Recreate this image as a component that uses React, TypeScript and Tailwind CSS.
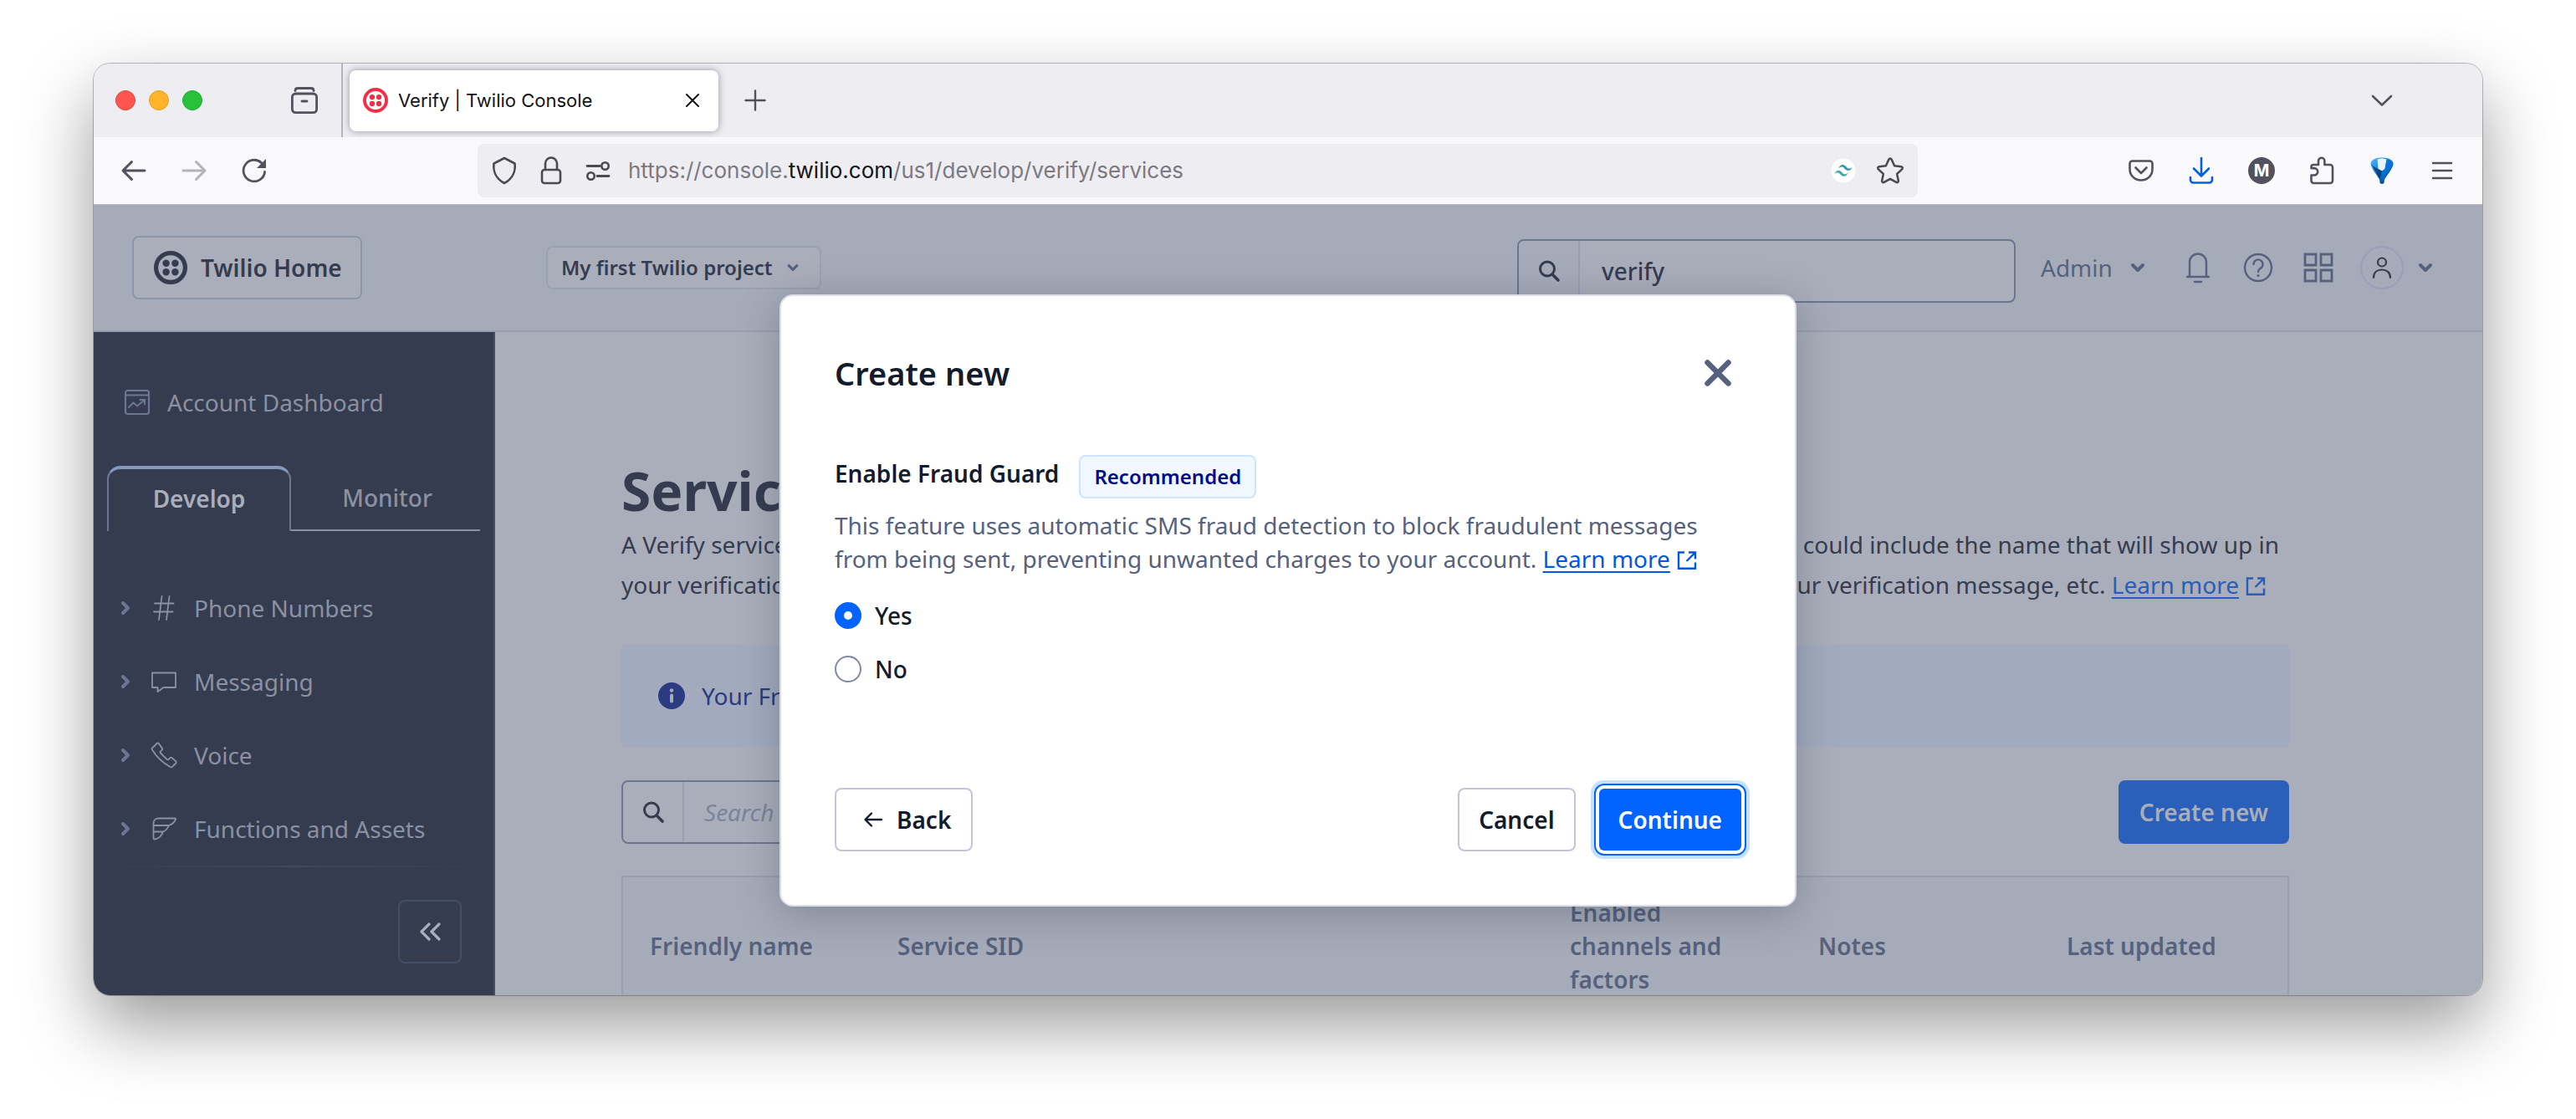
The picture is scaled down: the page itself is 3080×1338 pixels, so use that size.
import React from "react";

type IconProps = { className?: string };

const stroke = {
  fill: "none",
  stroke: "currentColor",
  strokeLinecap: "round" as const,
  strokeLinejoin: "round" as const,
};

function TwilioMark({ className }: IconProps) {
  return (
    <svg viewBox="0 0 40 40" className={className} aria-hidden="true">
      <circle cx="20" cy="20" r="17.4" fill="none" stroke="currentColor" strokeWidth="5.2" />
      <circle cx="14.6" cy="14.8" r="4.2" fill="currentColor" />
      <circle cx="25.4" cy="14.8" r="4.2" fill="currentColor" />
      <circle cx="14.6" cy="25.2" r="4.2" fill="currentColor" />
      <circle cx="25.4" cy="25.2" r="4.2" fill="currentColor" />
    </svg>
  );
}

function Chevron({ className }: IconProps) {
  return (
    <svg viewBox="0 0 20 20" className={className} aria-hidden="true">
      <path d="M4 7l6 6 6-6" {...stroke} strokeWidth="4" />
    </svg>
  );
}

function SearchIcon({ className }: IconProps) {
  return (
    <svg viewBox="0 0 28 28" className={className} aria-hidden="true">
      <circle cx="12" cy="11.5" r="8.5" {...stroke} strokeWidth="3" />
      <path d="M18 18l7 7" {...stroke} strokeWidth="3.6" />
    </svg>
  );
}

function ExternalIcon({ className }: IconProps) {
  return (
    <svg viewBox="0 0 24 24" className={className} aria-hidden="true">
      <path
        d="M9 2.5H2v19.2h20V14.5M14 2.5h8v8M21 3.5l-9.5 9.5"
        fill="none"
        stroke="currentColor"
        strokeWidth="2.4"
      />
    </svg>
  );
}

function TabStrip() {
  return (
    <div className="flex h-22 shrink-0 items-center bg-[#eeedf2] pl-[26px] pr-[100px] text-[#52525e]">
      <div className="flex gap-4">
        <span className="size-6 rounded-full border border-[#e0443e] bg-[#ff5650]" />
        <span className="size-6 rounded-full border border-[#dfa123] bg-[#ffb429]" />
        <span className="size-6 rounded-full border border-[#1dad2b] bg-[#27c238]" />
      </div>
      <button className="ml-[102px] flex size-10 items-center justify-center" aria-label="Firefox View">
        <svg viewBox="0 0 36 36" className="size-9">
          <path d="M7 6.5c0-2 1-3 3-3h16c2 0 3 1 3 3" {...stroke} strokeWidth="2.8" />
          <rect x="3.4" y="10" width="29.2" height="22.6" rx="4" {...stroke} strokeWidth="2.8" />
          <path d="M15 19h6" {...stroke} strokeWidth="2.8" />
        </svg>
      </button>
      <div className="ml-6 h-full w-0.5 bg-[#b4b4ba]" />
      <div className="ml-2 flex h-[73px] w-[441px] items-center rounded-lg bg-white pl-4 pr-[22px] shadow-[0_0_8px_rgba(60,60,80,0.5)]">
        <TwilioMark className="size-[30px] text-[#f22f46]" />
        <span className="ml-3 text-[22px] leading-8 text-[#15141a]">Verify | Twilio Console</span>
        <button className="ml-auto text-[#15141a]" aria-label="Close tab">
          <svg viewBox="0 0 18 18" className="size-[18px]">
            <path d="M2 2l14 14M16 2L2 16" {...stroke} strokeWidth="2" />
          </svg>
        </button>
      </div>
      <button className="ml-6 flex size-10 items-center justify-center" aria-label="New tab">
        <svg viewBox="0 0 26 26" className="size-[26px]">
          <path d="M13 1.5v23M1.5 13h23" {...stroke} strokeWidth="2.4" />
        </svg>
      </button>
      <button className="ml-auto flex size-10 items-center justify-center" aria-label="List all tabs">
        <svg viewBox="0 0 26 26" className="size-[26px]">
          <path d="M2 8l11 10.500L24 8" {...stroke} strokeWidth="2.6" />
        </svg>
      </button>
    </div>
  );
}

function ToolButton({ label, className, children }: { label: string; className?: string; children: React.ReactNode }) {
  return (
    <button aria-label={label} className={`flex w-[72px] items-center justify-center ${className ?? ""}`}>
      {children}
    </button>
  );
}

function Toolbar() {
  return (
    <div className="flex h-[81px] shrink-0 items-center border-b border-[#b9b9c0] bg-[#f9f9fb] px-3 text-[#52525e]">
      <ToolButton label="Back">
        <svg viewBox="0 0 32 32" className="size-8">
          <path d="M29 16H3.500M13.500 5.500L3 16l10.500 10.500" {...stroke} strokeWidth="3" />
        </svg>
      </ToolButton>
      <ToolButton label="Forward" className="text-[#b3b3bb]">
        <svg viewBox="0 0 32 32" className="size-8">
          <path d="M3 16h25.500M18.500 5.500L29 16 18.500 26.500" {...stroke} strokeWidth="3" />
        </svg>
      </ToolButton>
      <ToolButton label="Reload">
        <svg viewBox="0 0 32 32" className="size-8">
          <path d="M28.600 17.500A12.800 12.800 0 1 1 24.500 6.600" {...stroke} strokeWidth="2.800" />
          <path d="M30 2v11H19z" fill="currentColor" />
        </svg>
      </ToolButton>
      <div className="mx-[231px] flex h-16 min-w-0 flex-1 items-center rounded-lg bg-[#eeedf2] pl-4 pr-4 text-[#4b4a52]">
        <svg viewBox="0 0 32 36" className="h-9 w-8">
          <path d="M16 3l12.500 6.500c1.200 9-2.500 18-12.500 23.500C6 27.500 2.300 18.500 3.500 9.500z" {...stroke} strokeWidth="2.600" />
        </svg>
        <svg viewBox="0 0 28 36" className="ml-[26px] h-9 w-7">
          <rect x="3" y="17" width="22" height="16" rx="3" {...stroke} strokeWidth="2.600" />
          <path d="M7 17V9.500a7 7 0 0 1 14 0V17" {...stroke} strokeWidth="2.600" />
        </svg>
        <svg viewBox="0 0 32 28" className="ml-[26px] h-7 w-8">
          <path d="M3 8.500h15M15 20.500h14" {...stroke} strokeWidth="2.800" />
          <circle cx="24.500" cy="8.500" r="4.200" {...stroke} strokeWidth="2.600" />
          <circle cx="7.500" cy="20.500" r="4.200" {...stroke} strokeWidth="2.600" />
        </svg>
        <div className="ml-5 whitespace-nowrap text-[26px] leading-9 text-[#7b7a82]">
          https://console.<span className="text-[#15141a]">twilio.com</span>/us1/develop/verify/services
        </div>
        <svg viewBox="0 0 30 30" className="ml-auto size-[30px]">
          <circle cx="15" cy="15" r="14.500" fill="#fff" />
          <path d="M9.500 12.600c1-3.800 3.300-5.200 6.400-4.200 2.200.700 3 3.600 5.200 4 1.700.3 3.100-.4 4.300-2-1 3.800-3.300 5.200-6.400 4.200-2.200-.7-3-3.600-5.200-4-1.700-.3-3.100.400-4.300 2z" fill="#2e9ab0" />
          <path d="M4.500 19.400c1-3.800 3.300-5.200 6.400-4.200 2.200.700 3 3.600 5.200 4 1.700.3 3.100-.4 4.300-2-1 3.800-3.300 5.200-6.400 4.200-2.200-.7-3-3.600-5.200-4-1.700-.3-3.100.4-4.300 2z" fill="#3fa9ac" />
        </svg>
        <button className="ml-6" aria-label="Bookmark this page">
          <svg viewBox="0 0 34 34" className="size-[34px]">
            <path d="M17 2.500c.8 0 1.300.500 1.700 1.300l3.400 7.400 8 1c1.700.3 2.200 2 1 3.200l-5.900 5.500 1.600 8c.3 1.700-1.100 2.700-2.600 1.900L17 26.900l-7.200 3.900c-1.500.8-2.900-.200-2.600-1.900l1.600-8-5.900-5.500c-1.200-1.200-.7-2.900 1-3.200l8-1 3.400-7.400c.4-.8.900-1.300 1.700-1.300z" {...stroke} strokeWidth="2.600" />
          </svg>
        </button>
      </div>
      <ToolButton label="Save to Pocket">
        <svg viewBox="0 0 32 32" className="size-8">
          <path d="M5.500 4.500h21a3 3 0 0 1 3 3V14c0 7.800-5.500 13.500-13.500 13.500S2.500 21.800 2.500 14V7.500a3 3 0 0 1 3-3z" {...stroke} strokeWidth="2.600" />
          <path d="M9.500 12.500l6.500 6.500 6.500-6.500" {...stroke} strokeWidth="2.600" />
        </svg>
      </ToolButton>
      <ToolButton label="Downloads" className="text-[#0060df]">
        <svg viewBox="0 0 32 34" className="h-[34px] w-8">
          <path d="M16 2v21M7 14.500l9 9 9-9M3 25v3a3.500 3.500 0 0 0 3.500 3.500h19A3.500 3.500 0 0 0 29 28v-3" {...stroke} strokeWidth="2.600" />
        </svg>
      </ToolButton>
      <ToolButton label="Account">
        <span className="flex size-8 items-center justify-center rounded-full bg-[#52525e] text-[20px] font-bold leading-none text-white">
          M
        </span>
      </ToolButton>
      <ToolButton label="Extensions">
        <svg viewBox="0 0 32 36" className="h-9 w-8">
          <path d="M6 11h6V6.500a3.700 3.700 0 0 1 7.400 0V11H26a3 3 0 0 1 3 3v16a3 3 0 0 1-3 3H6.500a3 3 0 0 1-3-3v-6.500H7a4.200 4.200 0 0 0 0-8.400H3.500V13.500A2.500 2.500 0 0 1 6 11z" {...stroke} strokeWidth="2.600" />
        </svg>
      </ToolButton>
      <ToolButton label="Balloon extension">
        <svg viewBox="0 0 32 34" className="h-[34px] w-8">
          <defs>
            <linearGradient id="balloon" x1="0" y1="0" x2="1" y2="1">
              <stop offset="0" stopColor="#59b7ff" />
              <stop offset="0.450" stopColor="#0a84e8" />
              <stop offset="1" stopColor="#021c3c" />
            </linearGradient>
          </defs>
          <path d="M2.500 9C2.500 4 8.500 1.500 16 1.500S29.500 4 29.500 9c0 4.500-8.500 15-10.500 18.500l-.6 4.500c-.3 1-4.500 1-4.800 0l-.6-4.500C11 24 2.500 13.500 2.500 9z" fill="url(#balloon)" />
          <path d="M10.500 3.500c3-1.500 8-1.500 11 0L19.500 15 16 17.500 11.500 15z" fill="#e8f5ff" />
          <path d="M3 9c2.500 3 5 4.500 8.500 6L16 17.500 13.500 27z" fill="#04305f" opacity="0.750" />
          <path d="M21.500 3.500L19.500 15 16 17.500 17 30l1.500-3C22 20 28 14 29.400 9.500 28.500 6.500 25.500 4.500 21.500 3.500z" fill="#0a72d8" opacity="0.800" />
        </svg>
      </ToolButton>
      <ToolButton label="Open menu">
        <svg viewBox="0 0 28 28" className="size-7">
          <path d="M3 5h22M3 14h22M3 23h22" {...stroke} strokeWidth="2.600" />
        </svg>
      </ToolButton>
    </div>
  );
}

function AppHeader() {
  return (
    <header className="flex h-38 shrink-0 items-center border-b-2 border-[#989fb1] bg-[#a6abb9] text-[#353c50]">
      <div className="w-[541px] shrink-0 pl-[46px]">
        <a href="#home" className="inline-flex h-19 items-center gap-4 rounded-lg border-2 border-[#8d95ab] bg-[#a9aeba] pl-6 pr-[22px] text-[28px] font-semibold leading-10">
          <TwilioMark className="size-10" />
          Twilio Home
        </a>
      </div>
      <button className="flex h-13 items-center gap-4 rounded-lg border-2 border-[#9aa1b3] bg-[#a9aeba] pl-4 pr-6 text-[24px] font-semibold leading-9">
        My first Twilio project
        <Chevron className="size-4 text-[#56627d]" />
      </button>
      <label className="ml-auto mt-2 flex h-19 w-[596px] items-center overflow-hidden rounded-lg border-2 border-[#6b7691] bg-[#a9aeba]">
        <span className="flex h-full w-[73px] items-center justify-center border-r-2 border-[#989fb1] bg-[#a6abb9]">
          <SearchIcon className="size-7" />
        </span>
        <input aria-label="Search" defaultValue="verify" className="min-w-0 flex-1 bg-transparent px-[26px] text-[28px] font-medium leading-10 outline-none" />
      </label>
      <div className="flex w-[558px] shrink-0 items-center pl-[30px] text-[#56627d]">
        <button className="flex w-[152px] items-center gap-5 text-[28px] leading-10">
          Admin
          <Chevron className="size-5" />
        </button>
        <ToolButton label="Notifications">
          <svg viewBox="0 0 32 40" className="h-10 w-8">
            <path d="M6 30V13.500a10 10 0 0 1 20 0V30M3 31h26M12 37h8" {...stroke} strokeWidth="2.400" />
          </svg>
        </ToolButton>
        <ToolButton label="Help">
          <svg viewBox="0 0 36 36" className="size-9">
            <circle cx="18" cy="18" r="16" {...stroke} strokeWidth="2.400" />
            <path d="M12.500 14a5.500 5.500 0 1 1 8.300 4.700c-1.900 1.200-2.800 2.300-2.800 4.300" {...stroke} strokeWidth="2.400" />
            <circle cx="18" cy="27.500" r="1.600" fill="currentColor" />
          </svg>
        </ToolButton>
        <ToolButton label="Products">
          <svg viewBox="0 0 36 36" className="size-9">
            <path d="M2 2h13v13H2zM21 2h13v13H21zM2 21h13v13H2zM21 21h13v13H21z" {...stroke} strokeLinejoin="miter" strokeWidth="2.800" />
          </svg>
        </ToolButton>
        <button aria-label="User menu" className="ml-3.5 flex items-center gap-4">
          <span className="flex size-13 items-center justify-center rounded-full border-2 border-[#9e9cbb] text-[#353c50]">
            <svg viewBox="0 0 24 28" className="h-7 w-6">
              <circle cx="12" cy="7.500" r="5" {...stroke} strokeWidth="2.200" />
              <path d="M2 26c0-6.500 4.500-9.500 10-9.500S22 19.500 22 26" {...stroke} strokeWidth="2.200" />
            </svg>
          </span>
          <Chevron className="size-5" />
        </button>
      </div>
    </header>
  );
}

const navItems = [
  {
    label: "Phone Numbers",
    icon: <path d="M13.500 2L10 30M22.500 2L19 30M5 10.500h22.500M4 20.500h22.500" />,
  },
  {
    label: "Messaging",
    icon: <path d="M2 5.500h28v17.500H15.500L8.500 28v-5H2z" />,
  },
  {
    label: "Voice",
    icon: (
      <path d="M7.500 2L2 7.500c-.6.600-.5 1.600.2 2.600C7 17.500 15 25.500 23.500 30c1 .5 1.900.4 2.500-.2l4.300-4.300c.7-.7.700-1.500 0-2.200l-4.800-4.200c-.7-.6-1.500-.5-2.100.1l-1.600 1.700c-.7.700-1.600.7-2.300 0L12 13.500c-.6-.7-.6-1.500 0-2.100l1.800-1.700c.6-.6.600-1.400 0-2.100L9.700 2c-.6-.700-1.500-.700-2.200 0z" />
    ),
  },
  {
    label: "Functions and Assets",
    icon: (
      <path d="M9.500 3.500H29c1 0 1.300.7.900 1.500C28 9 25 11 22 12c-1.500 3.500-3.500 6-7 7.500-1.500 4.500-4.500 8-10 9-.9.100-1.500-.3-1.500-1.200V9.500c0-3.500 2.500-6 6-6zM4 12h18M4 19.500h11" />
    ),
  },
];

function Sidebar() {
  return (
    <aside className="flex w-[480px] shrink-0 flex-col border-r-2 border-[#434e69] bg-[#353c50] pt-16 text-[28px] leading-10 text-[#8a91a3]">
      <a href="#dashboard" className="flex items-center gap-5 pl-9">
        <svg viewBox="0 0 32 32" className="size-8 text-[#6b7695]">
          <rect x="2" y="2" width="28" height="28" rx="2.500" {...stroke} strokeWidth="2.200" />
          <path d="M2 7.500h28M6 22l5.500-5.500 4.500 4L25 13M19.500 13H25v5.500" {...stroke} strokeWidth="2" />
        </svg>
        Account Dashboard
      </a>
      <div role="tablist" className="mx-4 mt-14 flex h-[78px] font-medium">
        <button role="tab" aria-selected="true" className="w-[220px] rounded-t-2xl border-x-2 border-t-4 border-x-[#6b7695] border-t-[#8499bb] pb-1 font-semibold text-[#a9aeba]">
          Develop
        </button>
        <button role="tab" aria-selected="false" className="flex-1 border-b-2 border-[#8a91a3] pl-1">
          Monitor
        </button>
      </div>
      <nav className="mt-12 flex flex-col">
        {navItems.map((item) => (
          <a key={item.label} href="#nav" className="flex h-22 items-center pl-8">
            <svg viewBox="0 0 12 18" className="h-[18px] w-3 text-[#6b7695]">
              <path d="M3 3l6 6-6 6" {...stroke} strokeWidth="4" />
            </svg>
            <svg viewBox="0 0 32 32" className="ml-6 size-8" {...stroke} strokeWidth="1.800">
              {item.icon}
            </svg>
            <span className="ml-5">{item.label}</span>
          </a>
        ))}
      </nav>
      <div className="h-0.5 bg-linear-to-r from-transparent via-[#3e475c] to-transparent" />
      <div className="mt-auto flex justify-end pb-[38px] pr-[38px]">
        <button aria-label="Collapse navigation" className="flex size-19 items-center justify-center rounded-lg border-2 border-[#434e69] text-[#a9aeba]">
          <svg viewBox="0 0 28 24" className="h-6 w-7">
            <path d="M13 3l-9 9 9 9M25 3l-9 9 9 9" {...stroke} strokeWidth="3.200" />
          </svg>
        </button>
      </div>
    </aside>
  );
}

function Services() {
  return (
    <main className="min-w-0 flex-1 overflow-hidden bg-[#a9aeba] pl-[151px] pr-[231px] pt-[150px] text-[28px] text-[#353c50]">
      <h1 className="text-[64px] font-bold leading-[80px]">Services</h1>
      <p className="whitespace-nowrap leading-12">
        <span className="flex justify-between pr-3">
          <span>A Verify service is a set of</span>
          <span>common settings. It could include the name that will show up in</span>
        </span>
        <span className="flex justify-between pr-7">
          <span>your verification message, and</span>
          <span>
            the length of your verification message, etc.{" "}
            <a href="#learn" className="text-[#2a5db8]">
              <span className="underline underline-offset-4">Learn more</span>
              <ExternalIcon className="ml-2 inline size-6 align-[-3px]" />
            </a>
          </span>
        </span>
      </p>
      <div className="mt-12 flex h-[122px] items-center gap-5 bg-[#a2abbd] pl-11 text-[#2c3a80]">
        <svg viewBox="0 0 32 32" className="size-8">
          <circle cx="16" cy="16" r="16" fill="#2c3a80" />
          <circle cx="16" cy="9.500" r="2.200" fill="#a2abbd" />
          <path d="M16 15.500v7" stroke="#a2abbd" strokeWidth="4" strokeLinecap="round" />
        </svg>
        Your Fraud Guard settings
      </div>
      <div className="mt-10 flex items-center justify-between">
        <label className="flex h-19 w-[596px] items-center overflow-hidden rounded-lg border-2 border-[#6b7691]">
          <span className="flex h-full w-[73px] items-center justify-center border-r-2 border-[#989fb1]">
            <SearchIcon className="size-7" />
          </span>
          <input aria-label="Search services" placeholder="Search" className="min-w-0 flex-1 bg-transparent px-6 leading-10 outline-none placeholder:italic placeholder:text-[#7a849b]" />
        </label>
        <button className="h-19 rounded-lg bg-[#2a60b9] px-[25px] font-semibold text-[#a9aeba]">Create new</button>
      </div>
      <table className="mt-[38px] w-full table-fixed border-2 border-[#989fb1] bg-[#a6abb9] text-left leading-10 text-[#56627d]">
        <thead>
          <tr className="*:px-8 *:pb-6 *:pt-[22px] *:font-semibold">
            <th className="w-[297px]">Friendly name</th>
            <th>Service SID</th>
            <th className="w-[297px]">Enabled channels and factors</th>
            <th className="w-[297px]">Notes</th>
            <th className="w-[297px]">Last updated</th>
          </tr>
        </thead>
      </table>
    </main>
  );
}

function Dialog() {
  return (
    <div role="dialog" aria-labelledby="dialog-title" className="w-[1216px] rounded-2xl border-2 border-[#dcdfe8] bg-white px-16 text-[28px] text-[#121c2d] shadow-[0_8px_48px_rgba(18,28,45,0.25)]">
      <div className="flex items-center justify-between pb-[62px] pr-[11px] pt-16">
        <h2 id="dialog-title" className="text-[38px] font-semibold leading-[56px]">Create new</h2>
        <button aria-label="Close" className="text-[#56627d]">
          <svg viewBox="0 0 34 34" className="size-[34px]">
            <path d="M4.500 4.500l25 25M29.500 4.500l-25 25" {...stroke} strokeWidth="6.500" />
          </svg>
        </button>
      </div>
      <fieldset>
        <div className="flex h-18 items-center gap-6 pb-3">
          <legend className="font-semibold leading-10">Enable Fraud Guard</legend>
          <span className="mt-2 flex h-13 items-center rounded-lg border-2 border-[#cce4ff] bg-[#f0f7ff] px-4 text-[24px] font-semibold text-[#030b8c]">
            Recommended
          </span>
        </div>
        <p className="leading-10 text-[#56627d]">
          This feature uses automatic SMS fraud detection to block fraudulent messages from being sent, preventing unwanted charges to your account.{" "}
          <a href="#learn-more" className="whitespace-nowrap text-[#0057e0]">
            <span className="underline underline-offset-4">Learn more</span>
            <ExternalIcon className="ml-2 inline size-6 align-[-3px]" />
          </a>
        </p>
        <div className="mt-4 flex flex-col font-medium leading-10">
          {["Yes", "No"].map((option) => (
            <label key={option} className="flex h-16 items-center gap-4">
              <input
                type="radio"
                name="fraud-guard"
                defaultChecked={option === "Yes"}
                className="size-8 appearance-none rounded-full border-2 border-[#8189a6] checked:border-11 checked:border-[#0263ff]"
              />
              {option}
            </label>
          ))}
        </div>
      </fieldset>
      <div className="flex items-center pb-16 pt-[110px] font-semibold">
        <button className="flex h-19 items-center gap-4 rounded-lg border-2 border-[#c2c5d6] pl-8 pr-6">
          <svg viewBox="0 0 24 20" className="h-5 w-6">
            <path d="M22 10H3M10 2.500L2.500 10l7.500 7.500" {...stroke} strokeWidth="2.400" />
          </svg>
          Back
        </button>
        <button className="ml-auto h-19 rounded-lg border-2 border-[#c2c5d6] px-[23px]">Cancel</button>
        <button className="ml-7 h-[74px] rounded-md bg-[#0263ff] px-[23px] text-white shadow-[0_0_0_4px_#fff,0_0_0_6px_#0263ff,0_0_0_10px_#c6e0ff]">Continue</button>
      </div>
    </div>
  );
}

export default function App() {
  return (
    <div className="flex h-screen flex-col overflow-hidden bg-white px-28 pb-37 pt-19 font-['Inter',sans-serif]">
      <div className="flex min-h-0 flex-1 flex-col overflow-hidden rounded-[20px] shadow-[0_0_0_1px_rgba(0,0,0,0.25),0_36px_84px_rgba(0,0,0,0.4)]">
        <TabStrip />
        <Toolbar />
        <div className="relative flex min-h-0 flex-1 flex-col font-['Noto_Sans',sans-serif]">
          <AppHeader />
          <div className="flex min-h-0 flex-1">
            <Sidebar />
            <Services />
          </div>
          <div className="absolute inset-0 flex items-center justify-center">
            <Dialog />
          </div>
        </div>
      </div>
    </div>
  );
}
